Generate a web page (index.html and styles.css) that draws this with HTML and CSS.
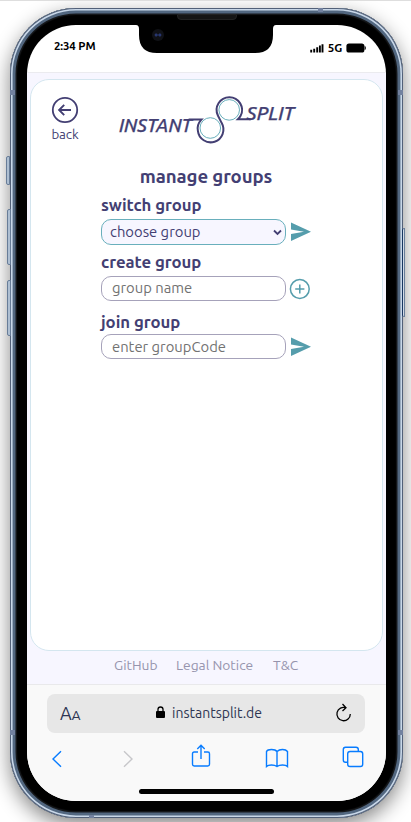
FILE: index.html
```html
<!DOCTYPE html>
<html lang="en">
<head>
<meta charset="utf-8">
<title>InstantSplit</title>
<link rel="stylesheet" href="styles.css">
</head>
<body>
<div class="phone">
  <i class="key mute"></i><i class="key up"></i><i class="key down"></i><i class="key power"></i>
  <i class="band b1"></i><i class="band b2"></i><i class="band b3"></i><i class="band b4"></i><i class="band b5"></i><i class="band b6"></i>
  <div class="screen">
    <header class="status">
      <span class="time">2:34 PM</span>
      <span class="signal">
        <svg width="14" height="9" viewBox="0 0 14 9"><path d="M1.2 8.6V5.8M4.2 8.6V4.8M7.2 8.6V3.2M9.9 8.6V1.6M12.5 8.6V.3" stroke="#000" stroke-width="1.9"/></svg>
        <b>5G</b>
        <svg width="20" height="10" viewBox="0 0 20 10"><rect x=".4" y=".4" width="18" height="9.2" rx="2.6"/><path d="M19 3.4q1 1.6 0 3.2z" stroke="#000" stroke-width=".6"/></svg>
      </span>
    </header>
    <svg class="notch" width="140" height="28" viewBox="0 0 140 28"><path d="M0 0Q3 0 3 4V10Q3 28 21 28H119Q137 28 137 10V4Q137 0 140 0z"/></svg>
    <main class="page">
      <section class="card">
        <div class="top">
          <a class="back">
            <svg width="28" height="28" viewBox="0 0 28 28" fill="none" stroke="#433f73" stroke-width="1.8"><circle cx="14" cy="14" r="12.2"/><path d="M20 14H8.5M13.2 8.9L8.1 14l5.1 5.1" stroke-width="1.9"/></svg>
            <span>back</span>
          </a>
          <svg class="logo" width="180" height="50" viewBox="0 0 180 50">
            <g class="word"><text x="1" y="36.5" textLength="73" lengthAdjust="spacingAndGlyphs">INSTANT</text><text x="128.5" y="24.5" textLength="48" lengthAdjust="spacingAndGlyphs">SPLIT</text></g>
            <g transform="translate(.6 .7)" fill="none">
              <g stroke="#433f73" stroke-width="2"><path d="M70 23.700H83C79 28 78.600 32 79.300 35.200A12.800 12.800 0 1 0 103.100 27.400L99.400 20A12.700 12.700 0 1 1 122 20.100C121.300 21.500 120.500 22.300 119.300 23.500H132"/></g>
              <g stroke="#69afbc" stroke-width="1"><circle cx="110.600" cy="14.200" r="10.300"/><circle cx="91.700" cy="32.300" r="10.300"/></g>
            </g>
          </svg>
        </div>
        <form class="groups">
          <h1>manage groups</h1>
          <h2>switch group</h2>
          <div class="row"><div class="field select"><span>choose group</span><svg width="9" height="7" viewBox="0 0 9 7"><path d="M1 1.5l3.5 3.5L8 1.5" fill="none" stroke="#433f73" stroke-width="1.8"/></svg></div><svg class="send" width="22" height="20" viewBox="0 0 22 20"><path d="M1 .5L21 9.8 1 19v-7l13-2.2L1 7.5z" fill="#559dac"/></svg></div>
          <h2 class="create">create group</h2>
          <div class="row"><div class="field name"><span>group name</span></div><svg class="plus" width="22" height="22" viewBox="0 0 22 22" fill="none" stroke="#559dac" stroke-width="1.5"><circle cx="10.800" cy="11" r="9.400"/><path d="M6.200 11h9.200M10.800 6.400v9.200"/></svg></div>
          <h2 class="join">join group</h2>
          <div class="row"><div class="field code"><span>enter groupCode</span></div><svg class="send" width="22" height="20" viewBox="0 0 22 20"><path d="M1 .5L21 9.8 1 19v-7l13-2.2L1 7.5z" fill="#559dac"/></svg></div>
        </form>
      </section>
      <nav class="links"><a class="gh">GitHub</a><a class="legal">Legal Notice</a><a class="terms">T&amp;C</a></nav>
    </main>
    <footer class="browser">
      <div class="address">
        <span class="aa">A<small>A</small></span>
        <span class="url"><svg width="9" height="13" viewBox="0 0 9 13"><rect y="5" width="9" height="7" rx="1"/><path d="M2 6V3.3Q2 1 4.5 1T7 3.3V6" fill="none" stroke="#000" stroke-width="1.3"/></svg><span>instantsplit.de</span></span>
        <svg class="reload" width="17" height="20" viewBox="0 0 17 20" fill="none" stroke="#000" stroke-width="1.3"><path d="M11 4.800A6.700 6.700 0 1 0 15.300 11M7.500 1l3.500 3.700L7.500 8"/></svg>
      </div>
      <div class="tools">
        <svg width="12" height="18" viewBox="0 0 12 18"><path d="M10 1.2L2 9l8 7.8"/></svg>
        <svg class="off" width="12" height="18" viewBox="0 0 12 18"><path d="M2 1.2L10 9l-8 7.8"/></svg>
        <svg class="share" width="20" height="24" viewBox="0 0 20 24"><path d="M7 8H3.200Q1.500 8 1.500 9.700V20.300Q1.500 22 3.200 22H16.800Q18.500 22 18.500 20.300V9.700Q18.500 8 16.800 8H13M10 15V1.500M6.300 5L10 1.300 13.700 5"/></svg>
        <svg class="book" width="24" height="20" viewBox="0 0 24 20"><path d="M12 18.500V3.500Q10.500 1.500 6.500 1.500T1.500 3.500V18.500Q3 17 6.500 17T12 18.500Q14 17 17.500 17T22.500 18.500V3.500Q21 1.500 17.500 1.500T12 3.500"/></svg>
        <svg class="tabs" width="22" height="22" viewBox="0 0 22 22"><rect x="5.700" y="5.500" width="15" height="15" rx="2.300"/><path d="M5.700 16.300H3.500Q1.300 16.300 1.300 14V3.500Q1.300 1.300 3.500 1.300H14Q16.300 1.300 16.300 3.500V5.500"/></svg>
      </div>
      <div class="home"></div>
    </footer>
  </div>
  <i class="speaker"></i><i class="camera"></i>
</div>
</body>
</html>
```
FILE: styles.css
```css
* { box-sizing: border-box; }
html { background: #fff; }
body { margin: 0; width: 411px; height: 822px; overflow: hidden; border-top: 1px solid #dedede; padding: 7px 0 0 10px; font-family: Ubuntu, "Noto Sans", sans-serif; color: #433f73; }
svg { display: block; flex: none; }
.phone { position: relative; width: 393px; height: 810px; padding: 17px; border-radius: 66px; background: #000; box-shadow: inset 0 0 0 1px #526078, inset 0 0 0 2.6px #c8d7e8, inset 0 0 0 5.5px #526780, inset 0 0 1px 7px #17191c, 0 7px 20px rgba(0,0,0,.48); }
.screen { position: relative; width: 359px; height: 776px; border-radius: 49px; overflow: hidden; background: #fff; }
.key { position: absolute; width: 4px; background: #aebfd2; border: 1px solid #687d98; border-radius: 2px 0 0 2px; }
.mute { left: -4px; top: 148px; height: 29px; }
.up { left: -3px; top: 201px; height: 56px; }
.down { left: -3px; top: 272px; height: 56px; }
.power { left: 392px; top: 220px; height: 89px; width: 3px; background: #d2dbe6; border-left-color: #183660; }
.band { position: absolute; background: #72819f; width: 5px; height: 5px; }
.b1 { left: 0; top: 82px; } .b2 { right: 0; top: 82px; } .b3 { left: 0; bottom: 83px; } .b4 { right: 0; bottom: 83px; } .b5 { left: 308px; top: 0; height: 4px; } .b6 { left: 79px; bottom: 0; height: 3px; }
.status { height: 48px; border-bottom: 1px solid #ebebef; display: flex; justify-content: space-between; padding: 14px 19px 0 27px; color: #000; line-height: 14px; }
.time { font-size: 11.4px; font-weight: 700; letter-spacing: -.1px; }
.signal { display: flex; height: 16px; align-items: center; gap: 4px; font-size: 11.6px; margin: 1px 1px 0 0; }
.signal b { letter-spacing: -.2px; margin-top: -1px; }
.notch { position: absolute; left: 109px; top: 0; }
.speaker { position: absolute; left: 167px; top: 6px; width: 60px; height: 6px; background: #151515; border: 1px solid #222; border-radius: 1px 1px 4px 4px; }
.camera { position: absolute; left: 142px; top: 21px; width: 12px; height: 12px; border-radius: 50%; background: radial-gradient(circle at 35% 50%, #27366f 0 1px, transparent 2px), radial-gradient(circle at 65% 50%, #27366f 0 1px, #101116 2px); }
.page { height: 611px; background: #f7f6ff; padding: 6px 3px 0; }
.card { height: 572px; border: 1px solid #d4e6ef; border-radius: 19px; background: #fff; padding: 15px 0 0 20px; }
.top { display: flex; height: 69px; }
.back { width: 28px; display: flex; flex-direction: column; align-items: center; font-size: 13.3px; line-height: 17px; }
.back span { margin-top: 2px; letter-spacing: -.1px; }
.back svg { margin-top: 1px; }
.logo { margin-left: 39px; }
.word { font: italic 500 18px Ubuntu, "Noto Sans", sans-serif; fill: #433f73; stroke: #433f73; stroke-width: .25px; }
.groups { width: 212px; margin-left: 50px; }
h1, h2 { margin: 0; font-weight: 700; white-space: nowrap; }
h1 { width: 184px; font-size: 18.6px; text-align: center; line-height: 25px; height: 29px; margin-left: 13px; letter-spacing: -.09px; }
h2 { font-size: 16.75px; line-height: 23px; height: 26px; letter-spacing: -.05px; }
.create { margin-top: 6px; height: 25px; line-height: 22px; }
.join { margin-top: 10px; height: 23px; line-height: 22px; }
.row { display: flex; align-items: center; gap: 4px; }
.field { width: 185px; height: 25px; border: 1px solid #a6a2ba; border-radius: 10px; display: flex; align-items: center; justify-content: space-between; padding: 0 3px 0 10px; font-size: 14.8px; color: #727272; line-height: 20px; white-space: nowrap; }
.name span { margin-top: -2px; }
.name + .plus { margin-left: -1px; }
.select { height: 26px; background: #f7f6ff; border-color: #69afbc; color: #433f73; padding-left: 8px; }
.links { display: flex; padding: 4px 0 0 84px; gap: 18px; color: #9694ad; font-size: 13.8px; line-height: 20px; white-space: nowrap; }
.gh { width: 44px; } .legal { width: 79px; }
.browser { height: 117px; background: #f9f9f9; border-top: 1px solid #e9e9eb; padding: 9px 21px 0 20px; }
.address { height: 39px; border-radius: 8px; background: #e7e7e7; display: flex; align-items: center; padding: 0 13px; color: #2e3552; }
.aa { font-size: 18px; line-height: 24px; width: 96px; }
.aa small { font-size: 13.5px; }
.url { display: flex; align-items: center; gap: 7px; font-size: 14px; line-height: 20px; flex: 1; margin-top: -2px; }
.reload { margin-top: -2px; }
.tools { height: 46px; display: flex; align-items: center; padding: 5px 0 0 4px; fill: none; stroke: #087cff; stroke-width: 1.4; }
.off { stroke: #c7c7ca; margin-left: 59px; }
.share { margin: -5px 0 0 57px; }
.book { margin: -1px 0 0 54px; }
.tabs { margin: -4px 0 0 53px; }
.home { width: 135px; height: 5px; background: #000; border-radius: 3px; margin: 10px 0 0 92px; }
```
